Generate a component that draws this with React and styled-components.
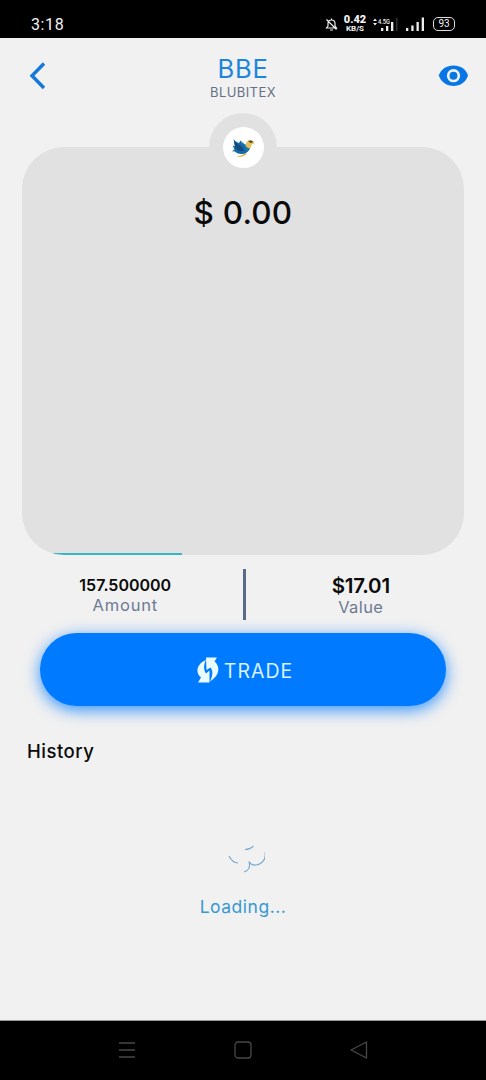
import React from "react";
import styled, { createGlobalStyle } from "styled-components";

const GlobalStyle = createGlobalStyle`
  * { box-sizing: border-box; }
  body { margin: 0; background: #f1f1f1; font-family: Inter, "Liberation Sans", sans-serif; }
`;

const Screen = styled.div`
  display: flex;
  flex-direction: column;
  width: 486px;
  height: 1080px;
  overflow: hidden;
  background: #f1f1f1;
  color: #0a0a0a;
`;

const StatusBar = styled.header`
  display: flex;
  align-items: center;
  flex: none;
  height: 38px;
  padding: 10px 31px 0 31px;
  background: #000;
  color: #f2f2f2;
`;

const Clock = styled.span`
  flex: 1;
  padding-top: 1px;
  font: 400 16px/20px Roboto, sans-serif;
  letter-spacing: 0.6px;
`;

const StatusIcons = styled.div`
  display: flex;
  align-items: center;
  svg { display: block; }
`;

const Speed = styled.div`
  display: flex;
  flex-direction: column;
  align-items: center;
  width: 24px;
  margin: 0 6px 0 5px;
  font: 700 8px/8px Roboto, sans-serif;
  white-space: nowrap;
  b { font-size: 11px; line-height: 10px; }
`;

const SignalGap = styled.span`
  width: 6px;
`;

const Battery = styled.span`
  width: 22px;
  height: 14px;
  margin-left: 8px;
  border: 1.5px solid #ddd;
  border-radius: 5px;
  font: 400 10px/12px Roboto, sans-serif;
  text-align: center;
`;

const TopBar = styled.nav`
  display: flex;
  justify-content: space-between;
  flex: none;
  height: 75px;
  padding: 0 18px 0 28px;
`;

const IconButton = styled.button`
  width: ${(p) => p.$width || 30}px;
  height: 75px;
  padding: 0;
  border: 0;
  background: none;
  svg { display: block; }
`;

const Heading = styled.div`
  display: flex;
  flex-direction: column;
  align-items: center;
  padding-top: 16px;
`;

const Label = styled.span`
  display: block;
  color: ${(p) => p.$color || "#0a0a0a"};
  font-size: ${(p) => p.$size}px;
  font-weight: ${(p) => p.$weight || 400};
  line-height: ${(p) => p.$line}px;
  letter-spacing: ${(p) => p.$track || 0}px;
  white-space: nowrap;
`;

const Main = styled.main`
  display: flex;
  flex-direction: column;
  align-items: center;
  flex: 1;
`;

const CoinRing = styled.div`
  position: relative;
  z-index: 1;
  display: flex;
  align-items: center;
  justify-content: center;
  width: 68px;
  height: 68px;
  border-radius: 50%;
  background: #e1e1e1;
`;

const Coin = styled.div`
  display: flex;
  width: 41px;
  height: 41px;
  border-radius: 50%;
  background: #fff;
`;

const ChartCard = styled.section`
  display: flex;
  flex-direction: column;
  align-items: center;
  justify-content: space-between;
  width: 442px;
  height: 408px;
  margin-top: -34px;
  padding-top: 44px;
  overflow: hidden;
  border-radius: 42px;
  background: #e1e1e1;
`;

const Progress = styled.div`
  align-self: flex-start;
  width: 160px;
  height: 2px;
  background: #39b5c6;
`;

const Stats = styled.section`
  display: flex;
  width: 441px;
  height: 51px;
  margin-top: 14px;
`;

const Stat = styled.div`
  display: flex;
  flex: 1;
  flex-direction: column;
  align-items: center;
  padding-top: ${(p) => p.$top}px;
  padding-left: ${(p) => p.$left || 0}px;
  padding-right: ${(p) => p.$right || 0}px;
`;

const Divider = styled.div`
  width: 3px;
  background: #5a6a88;
`;

const TradeButton = styled.button`
  display: flex;
  align-items: center;
  justify-content: center;
  gap: 5px;
  width: 406px;
  height: 73px;
  margin: 13px 0 0;
  padding: 0 0 0 4px;
  border: 0;
  border-radius: 37px;
  background: #007aff;
  box-shadow: 0 4px 16px rgba(0, 122, 255, 0.8);
  font-family: inherit;
`;

const ButtonLabel = styled(Label)`
  padding-top: 2px;
`;

const History = styled.section`
  width: 100%;
  padding: 32px 27px 0;
`;

const Loading = styled.div`
  display: flex;
  flex-direction: column;
  align-items: center;
  gap: 22px;
  padding-top: 78px;
`;

const NavBar = styled.footer`
  display: flex;
  align-items: center;
  justify-content: space-between;
  flex: none;
  height: 60px;
  padding: 0 118px 1px 117px;
  border-top: 1px solid #999;
  background: #000;
`;

const DataSignal = () => (
  <svg width="27" height="16" viewBox="0 0 27 16" fill="#eee">
    <path d="M0 5l2-2.500L4 5zM0 7l2 2.500L4 7z" />
    <text x="5" y="8" fontSize="7.5" fontWeight="500" fontFamily="Roboto" textLength="12" lengthAdjust="spacingAndGlyphs">4.5G</text>
    <path d="M8 12h2.300v3H8zM13 10h2.300v5H13zM18 6h2.300v9H18z" />
    <path d="M23 2h1.500v13H23z" fill="#333" />
  </svg>
);

const CellSignal = () => (
  <svg width="19" height="16" viewBox="0 0 19 16" fill="#eee">
    <path d="M0 12h2.300v3H0zM5.300 9.500h2.300V15H5.300zM10.500 6h2.300v9h-2.300zM15.700 1.500H18V15h-2.300z" />
  </svg>
);

export default function App() {
  return (
    <>
      <GlobalStyle />
      <Screen>
        <StatusBar>
          <Clock>3:18</Clock>
          <StatusIcons>
            <svg width="13" height="15" viewBox="0 0 13 15" fill="none" stroke="#eee" strokeWidth="1.200">
              <path d="M1.500 11h10L10 9V6.500C10 4.500 9 3 6.500 3S3 4.500 3 6.500V9zM6.500 3V1.500M5 13h3M1.500 2.500l10 10" />
            </svg>
            <Speed><b>0.42</b><span>KB/S</span></Speed>
            <DataSignal />
            <SignalGap />
            <CellSignal />
            <Battery>93</Battery>
          </StatusIcons>
        </StatusBar>
        <TopBar>
          <IconButton $width={20} aria-label="Back">
            <svg width="20" height="75" viewBox="0 0 20 75" fill="none" stroke="#1478dc" strokeWidth="3.400">
              <path d="M16 25.500L4 37.800L16 50" />
            </svg>
          </IconButton>
          <Heading>
            <Label $size={25.5} $line={30} $color="#1b86dc" $track={0.8}>BBE</Label>
            <Label $size={13} $line={16} $color="#667085" $track={0.4}>BLUBITEX</Label>
          </Heading>
          <IconButton aria-label="Toggle balance">
            <svg width="30" height="75" viewBox="0 0 30 75">
              <path d="M.8 37.500C3 31 8.500 27.500 15.500 27.500S28 31 30 37.500C28 44 22 48 15.500 48S3 44 .8 37.500z" fill="#0877e6" />
              <circle cx="15.500" cy="37.700" r="5.300" fill="#0877e6" stroke="#f1f1f1" strokeWidth="2.700" />
            </svg>
          </IconButton>
        </TopBar>
        <Main>
          <CoinRing>
            <Coin>
              <svg width="41" height="41" viewBox="0 0 41 41">
                <path d="M13 29.500c5 1 9 0 11-3l-2-.5c-2 2-5 3-9 3.500z" fill="#d9bf62" />
                <path d="M10.500 12c2 3 4 3 5.500 4l1.500-2.500c2 3 5 3.500 7 5.500h3c-.5 4-3 7.500-8 8-4 .3-6-.8-7.500-2.500l-3-.2 2.500-1.800-2-4 2.500 1z" fill="#1768a5" />
                <path d="M11 14c4 4 8 4 10 10-4 .5-8-1-9-4z" fill="#114b80" />
                <path d="M18 15c3 3 6 4 6 8" fill="none" stroke="#3295b8" strokeWidth="1" />
                <path d="M23 19.500c-.5-3.500 1-6 4-6 2.500-.2 4.500 1 4 3l-2.500 1c.2 2-1 3.500-2.500 4z" fill="#e4c15c" />
                <path d="M25 14l3-.7 2.500 1.700-3 1z" fill="#52502e" />
              </svg>
            </Coin>
          </CoinRing>
          <ChartCard>
            <Label $size={31.5} $line={43} $weight={550} $track={0.2}>$ 0.00</Label>
            <Progress />
          </ChartCard>
          <Stats>
            <Stat $top={7} $right={15}>
              <Label $size={16} $line={19} $weight={600}>157.500000</Label>
              <Label $size={16.5} $line={20} $color="#6d7b91" $track={0.8}>Amount</Label>
            </Stat>
            <Divider />
            <Stat $top={6} $left={12}>
              <Label $size={20.5} $line={22} $weight={600} $track={-0.2}>$17.01</Label>
              <Label $size={16.5} $line={21} $color="#6d7b91" $track={0.4}>Value</Label>
            </Stat>
          </Stats>
          <TradeButton>
            <svg width="22" height="26" viewBox="0 0 22 26" fill="#e9fbff">
              <path d="M9 .5H20l-2.500 4C23 9 23.500 18 13 24.500c3-6 3-11 .5-14L9.500 13z" />
              <path d="M9 3C-.5 7-2 15.500 4 20.500L1 25.500H12.500V13.500L9 16.500C6.500 13 6.500 8 9 3z" />
            </svg>
            <ButtonLabel $size={19.5} $line={24} $color="#d9f3ff" $track={1}>TRADE</ButtonLabel>
          </TradeButton>
          <History>
            <Label $size={18.5} $line={26} $weight={550} $track={0.5}>History</Label>
            <Loading>
              <svg width="44" height="32" viewBox="0 0 44 32" fill="none" stroke="#72a9d4" strokeWidth="1.200">
                <path d="M8 14c2 4 5 7 9 7M24 7.500c3 0 6-1 8.500-3.500M44 10c1.500 7-3 12-8.500 13-3.500.5-6-1-7.500-3.500 1.500 5 0 9-5 10.500" />
              </svg>
              <Label $size={17.5} $line={22} $color="#3799d3" $track={0.5}>Loading...</Label>
            </Loading>
          </History>
        </Main>
        <NavBar>
          <svg width="19" height="18" viewBox="0 0 19 18" stroke="#484848" strokeWidth="1.300">
            <path d="M2 2h16M2 9h16M2 16h16" />
          </svg>
          <svg width="18" height="18" viewBox="0 0 18 18" fill="none" stroke="#484848" strokeWidth="1.300">
            <rect x="1" y="1" width="16" height="16" rx="3" />
          </svg>
          <svg width="18" height="18" viewBox="0 0 18 18" fill="none" stroke="#484848" strokeWidth="1.300" strokeLinejoin="round">
            <path d="M16.500 1v16L1 9z" />
          </svg>
        </NavBar>
      </Screen>
    </>
  );
}
